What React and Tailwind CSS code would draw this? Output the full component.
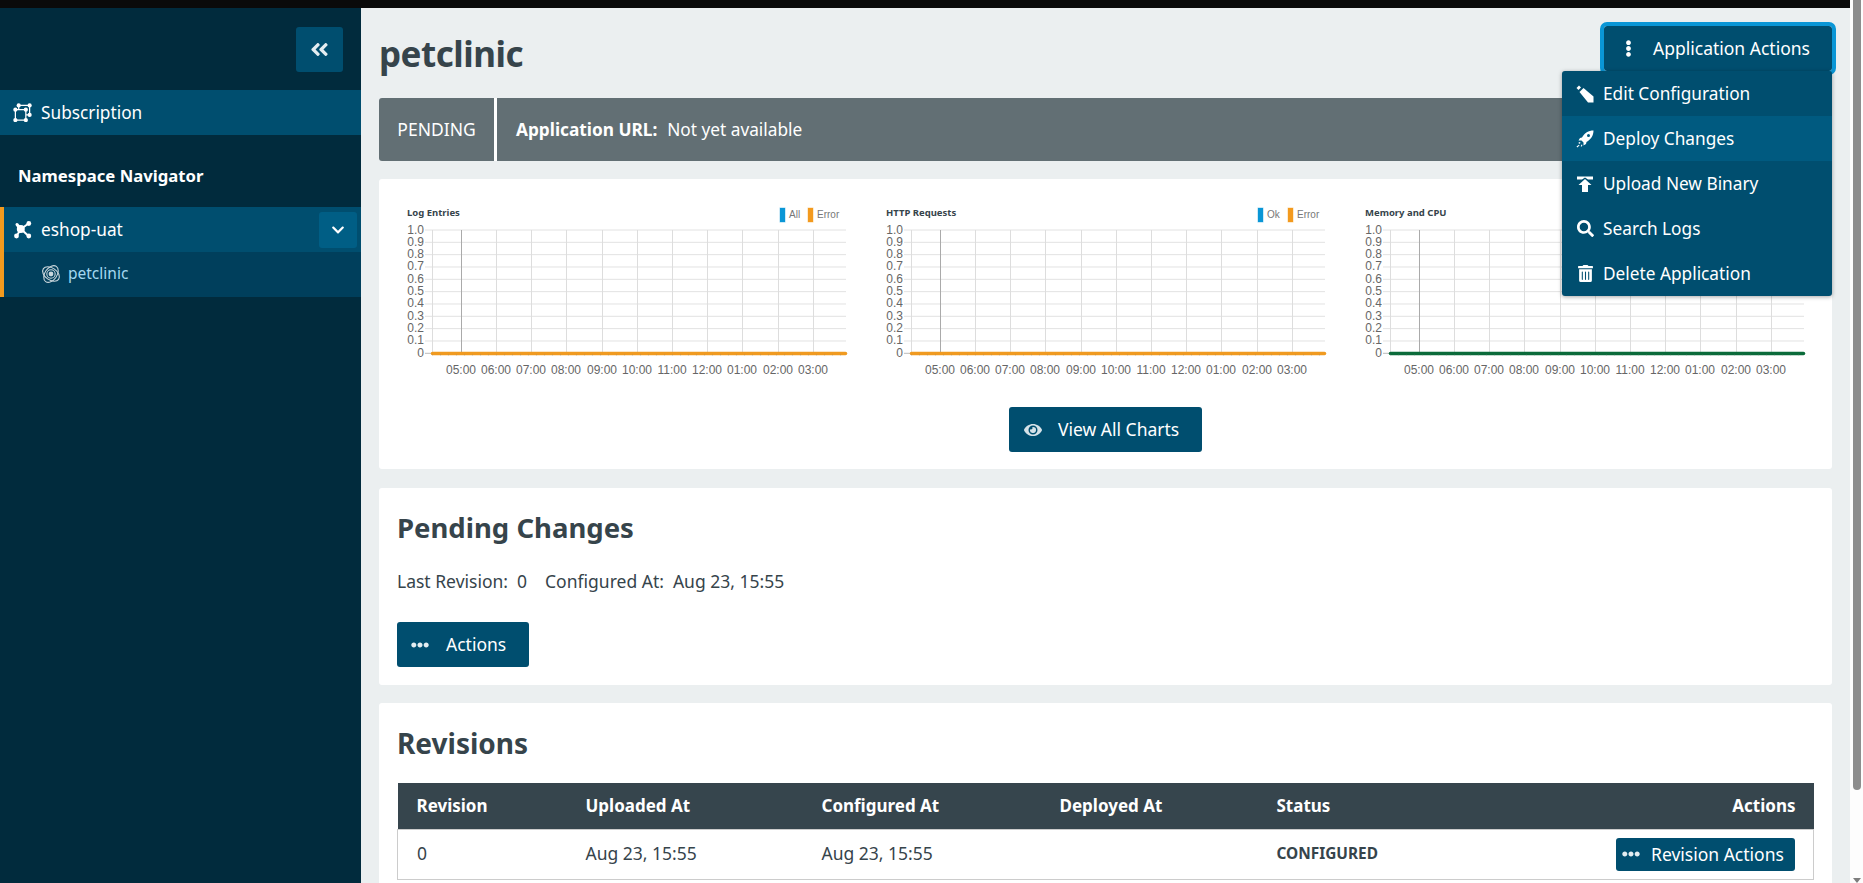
import { FaAngleDoubleLeft, FaChevronDown, FaEllipsisH, FaEllipsisV, FaEye, FaSearch, FaTrashAlt } from "react-icons/fa";

const yLabels = ["1.0", "0.9", "0.8", "0.7", "0.6", "0.5", "0.4", "0.3", "0.2", "0.1", "0"];
const xTicks = [
  [66, "05:00"],
  [101, "06:00"],
  [136, "07:00"],
  [171, "08:00"],
  [207, "09:00"],
  [242, "10:00"],
  [277, "11:00"],
  [312, "12:00"],
  [347, "01:00"],
  [383, "02:00"],
  [418, "03:00"]
];

const charts = [
  { title: "Log Entries", line: "#f09a20", legend: [["All", "#0a96d6", 385, 394], ["Error", "#f39a1e", 413, 422]] },
  { title: "HTTP Requests", line: "#f09a20", legend: [["Ok", "#0a96d6", 384, 393], ["Error", "#f39a1e", 414, 423]] },
  { title: "Memory and CPU", line: "#0b6b3a", legend: [] }
];

const menuItems = [
  ["Edit Configuration", <WandIcon />],
  ["Deploy Changes", <RocketIcon />],
  ["Upload New Binary", <UploadIcon />],
  ["Search Logs", <FaSearch className="h-[17px] w-[17px]" />],
  ["Delete Application", <FaTrashAlt className="h-[17px] w-[17px]" />]
];

const fontStack = "font-['Noto_Sans',sans-serif]";

function WandIcon() {
  return (
    <svg viewBox="0 0 18 18" className="h-[18px] w-[18px]" fill="currentColor">
      <path d="M.5 3 3 .5l2 2L2.500 5z" />
      <path d="M3.500 7 7.500 3l10 8.500v6H12z" />
    </svg>
  );
}

function RocketIcon() {
  return (
    <svg viewBox="0 0 18 18" className="h-[18px] w-[18px]" fill="currentColor">
      <path
        fillRule="evenodd"
        d="M17.500.5C12.500.5 8.500 3 6 7.500L4 8 2.500 10.500 5.500 10.500 7.500 12.500 7.500 15.500 10 14 10.500 12C15 9.500 17.500 5.500 17.500.5zM12.500 4a1.500 1.500 0 1 1 0 3 1.500 1.500 0 0 1 0-3z"
      />
      <path d="M2.500 12.500 4 12l.5 1-1.500 1zM.5 16.500 3 14.800l.5.7-2.200 2zM5.500 14.500l1 .5-1 1.700-.8-.5z" />
    </svg>
  );
}

function UploadIcon() {
  return (
    <svg viewBox="0 0 18 18" className="h-[18px] w-[18px]" fill="currentColor">
      <path d="M1 1.500h16v3h-5L9 2.500 6 4.500H1z" />
      <path d="M9 4l6.500 6H12v7H6v-7H2.500z" />
    </svg>
  );
}

function SubscriptionIcon() {
  return (
    <svg viewBox="0 0 20 20" className="h-[19px] w-[19px] shrink-0" fill="currentColor" stroke="currentColor">
      <path d="M6 2.500h11.500v10H13.500M2.500 7h11v11H2.500zM6 2.500V7" fill="none" strokeWidth="1.300" />
      {[[6, 2.5], [17.5, 2.5], [2.5, 7], [13.5, 7], [17.5, 12.5], [2.5, 18], [13.5, 18]].map(([cx, cy]) => (
        <circle key={`${cx}-${cy}`} cx={cx} cy={cy} r="2.200" stroke="none" />
      ))}
    </svg>
  );
}

function NamespaceIcon() {
  return (
    <svg viewBox="0 0 18 18" className="h-[18px] w-[18px] shrink-0" fill="currentColor" stroke="currentColor">
      <path d="M7 8 14.500 2.500M7 8l7.500 7M7 8 2.500 15" strokeWidth="2" />
      <path d="M6.500 8 3 3.500" strokeWidth="3" strokeLinecap="round" />
      <circle cx="6.800" cy="8" r="4" stroke="none" />
      <circle cx="14.800" cy="2.500" r="2.400" stroke="none" />
      <circle cx="14.800" cy="15" r="2.400" stroke="none" />
      <circle cx="2.500" cy="15" r="2.400" stroke="none" />
    </svg>
  );
}

function AtomIcon() {
  return (
    <svg viewBox="0 0 20 20" className="h-5 w-5" fill="none" stroke="currentColor" strokeWidth="1.100">
      <ellipse cx="10" cy="10" rx="9.300" ry="6" transform="rotate(35 10 10)" />
      <ellipse cx="10" cy="10" rx="9.300" ry="6" transform="rotate(-55 10 10)" />
      <circle cx="10" cy="10" r="4.200" />
      <circle cx="10" cy="10" r="2.400" fill="currentColor" stroke="none" />
    </svg>
  );
}

function Chart({ title, line, legend }) {
  return (
    <svg viewBox="0 0 463 196" className="block h-[196px] w-[463px]" fontFamily="'Liberation Sans', sans-serif">
      <text x="12" y="21" fontSize="9.500" fontWeight="700" fill="#36444b" fontFamily="'Noto Sans', sans-serif">{title}</text>
      {legend.map(([label, color, swatch, text]) => (
        <g key={label}>
          <rect x={swatch - 0.5} y="12.500" width="6" height="15" fill={color} fillOpacity="0.4" />
          <rect x={swatch} y="13" width="5" height="14" fill={color} />
          <text x={text} y="22.500" fontSize="10" fill="#777">{label}</text>
        </g>
      ))}
      {yLabels.map((label, i) => {
        const y = 35 + i * 12.33;
        return (
          <g key={label}>
            <line x1="30" x2="451" y1={y} y2={y} stroke={i === 10 ? "#bbb" : "#e2e2e2"} />
            <text x="29" y={y + 3.500} fontSize="12" textAnchor="end" fill="#666">{label}</text>
          </g>
        );
      })}
      <line x1="37.500" x2="37.500" y1="35" y2="158" stroke="#ddd" />
      {xTicks.map(([x, label], i) => (
        <g key={label}>
          <line x1={x + 0.5} x2={x + 0.5} y1="35" y2="158" stroke={i === 0 ? "#aaa" : "#ddd"} />
          <text x={x} y="179" fontSize="12" textAnchor="middle" fill="#666">{label}</text>
        </g>
      ))}
      <line x1="37.500" x2="450.500" y1="158.500" y2="158.500" stroke={line} strokeWidth="3.500" strokeLinecap="round" />
      <line x1="37" x2="451" y1="160" y2="160" stroke="#777" strokeOpacity="0.35" strokeDasharray="1 7" />
    </svg>
  );
}

export default function App() {
  return (
    <div className={`flex h-[883px] w-full overflow-hidden bg-[#ebeff0] ${fontStack} text-[17.25px] text-[#36444b]`}>
      <div className="flex min-w-0 flex-1 flex-col">
        <div className="h-2 bg-[#0a0a0a]" />
        <div className="flex min-h-0 flex-1">
          <aside className="w-[361px] shrink-0 bg-[#012b3d] text-white">
            <div className="flex justify-end pt-[19px] pr-[18px]">
              <button className="flex h-[45px] w-[47px] items-center justify-center rounded-[3px] bg-[#004e6f]">
                <FaAngleDoubleLeft className="h-[21px] w-[21px] text-[#e3edf1]" />
              </button>
            </div>
            <div className="mt-[18px] flex h-[45px] items-center gap-[9px] bg-[#004e6f] pl-[13px] text-white">
              <SubscriptionIcon />
              <span className="pt-px">Subscription</span>
            </div>
            <div className="flex h-[72px] items-center pt-[9px] pl-[18px] text-[16.7px] font-bold">Namespace Navigator</div>
            <div className="border-l-4 border-[#f39a1e]">
              <div className="flex h-[45px] items-center bg-[#004e6f] pl-[10px] pr-[4px]">
                <span className="mr-[9px]"><NamespaceIcon /></span>
                <span>eshop-uat</span>
                <button className="ml-auto flex h-9 w-[38px] items-center justify-center rounded-[3px] bg-[#005e85]">
                  <FaChevronDown className="h-[14px] w-[14px]" />
                </button>
              </div>
              <div className="flex h-[45px] items-center gap-[7px] bg-[#003f5c] pb-px pl-[37px] text-[15.5px] text-[#a4d8f0]">
                <span className="text-[#c9d6dc]"><AtomIcon /></span>
                <span>petclinic</span>
              </div>
            </div>
          </aside>

          <main className="relative min-w-0 flex-1 px-[18px]">
            <div className="flex h-[90px] items-start justify-between">
              <h1 className="mt-[23px] text-[35px] font-bold leading-[46px] tracking-[-0.5px]">petclinic</h1>
              <div className="relative mt-[18px]">
                <button className="flex h-[45px] w-[228px] items-center rounded-[3px] bg-[#004e6f] pl-[16px] text-[17.5px] text-white outline-4 outline-[#0a96d6]">
                  <FaEllipsisV className="h-[17px] w-[17px]" />
                  <span className="ml-[16px]">Application Actions</span>
                </button>
                <div className="absolute top-[45px] right-0 z-10 w-[270px] overflow-hidden rounded-[3px] bg-[#004e6f] text-white shadow-[0_1px_4px_rgba(0,0,0,0.35)]">
                  {menuItems.map(([label, icon], i) => (
                    <div key={label} className={`flex h-[45px] items-center gap-[9px] pl-[14px] ${i === 1 ? "bg-[#005a80]" : ""}`}>
                      <span className="flex w-[18px] shrink-0 justify-center">{icon}</span>
                      <span className="pt-px">{label}</span>
                    </div>
                  ))}
                </div>
              </div>
            </div>

            <div className="flex h-[63px] items-stretch overflow-hidden rounded-[3px] bg-[#626f74] text-[17.5px] text-white">
              <div className="flex w-[115px] items-center justify-center">PENDING</div>
              <div className="w-[3px] bg-white" />
              <div className="flex items-center pl-[19px] text-[17.25px]">
                <span className="mr-[10px] font-bold">Application URL:</span>
                <span>Not yet available</span>
              </div>
            </div>

            <section className="mt-[18px] h-[290px] rounded-[3px] bg-white p-4">
              <div className="grid grid-cols-3 gap-4">
                {charts.map((chart) => (
                  <Chart key={chart.title} {...chart} />
                ))}
              </div>
              <div className="mt-4 flex justify-center">
                <button className="flex h-[45px] w-[193px] items-center rounded-[3px] bg-[#004e6f] pl-[15px] text-[17.5px] text-white">
                  <FaEye className="h-[18px] w-[18px] text-[#d5e2e8]" />
                  <span className="ml-[16px]">View All Charts</span>
                </button>
              </div>
            </section>

            <section className="mt-[19px] h-[197px] rounded-[3px] bg-white px-[18px] pt-[22px]">
              <h2 className="text-[27.5px] font-bold leading-[36px]">Pending Changes</h2>
              <div className="mt-[23px] flex h-6 items-center text-[17.5px]">
                <span>Last Revision:</span>
                <span className="ml-[9px]">0</span>
                <span className="ml-[18px]">Configured At:</span>
                <span className="ml-[9px]">Aug 23, 15:55</span>
              </div>
              <button className="mt-[29px] flex h-[45px] w-[132px] items-center rounded-[3px] bg-[#004e6f] pl-[14px] text-[17.5px] text-white">
                <FaEllipsisH className="h-[18px] w-[18px] text-[#e3edf1]" />
                <span className="ml-[17px]">Actions</span>
              </button>
            </section>

            <section className="mt-[18px] h-[300px] rounded-[3px] bg-white px-[18px] pt-[22px]">
              <h2 className="text-[28px] font-bold leading-[36px]">Revisions</h2>
              <table className="mt-[22px] w-full table-fixed border-collapse text-left">
                <thead>
                  <tr className="h-[46px] bg-[#36454d] text-[17px] text-white">
                    <th className="w-[169px] pl-[19px] font-bold">Revision</th>
                    <th className="w-[236px] pl-[19px] font-bold">Uploaded At</th>
                    <th className="w-[238px] pl-[19px] font-bold">Configured At</th>
                    <th className="w-[217px] pl-[19px] font-bold">Deployed At</th>
                    <th className="pl-[19px] font-bold">Status</th>
                    <th className="pr-[18px] text-right font-bold">Actions</th>
                  </tr>
                </thead>
                <tbody>
                  <tr className="h-[50px] border border-[#cccccc] text-[17.5px]">
                    <td className="pb-px pl-[19px]">0</td>
                    <td className="pb-px pl-[19px]">Aug 23, 15:55</td>
                    <td className="pb-px pl-[19px]">Aug 23, 15:55</td>
                    <td className="pl-[19px]" />
                    <td className="pl-[19px] text-[15.4px] font-bold">CONFIGURED</td>
                    <td className="pr-[18px]">
                      <button className="ml-auto flex h-[33px] w-[179px] items-center rounded-[3px] bg-[#004e6f] pl-[6px] text-white">
                        <FaEllipsisH className="h-[18px] w-[18px] text-[#e3edf1]" />
                        <span className="ml-[11px]">Revision Actions</span>
                      </button>
                    </td>
                  </tr>
                </tbody>
              </table>
            </section>
          </main>
        </div>
      </div>

      <div className="relative w-[13px] shrink-0 bg-[#fdfdfd]">
        <div className="ml-[3px] h-[790px] w-2 rounded-b-[4px] bg-[#8d8d8d]" />
        <div className="absolute right-[2px] bottom-0 h-0 w-0 border-x-[4px] border-t-[5px] border-x-transparent border-t-[#7d7d7d]" />
      </div>
    </div>
  );
}
